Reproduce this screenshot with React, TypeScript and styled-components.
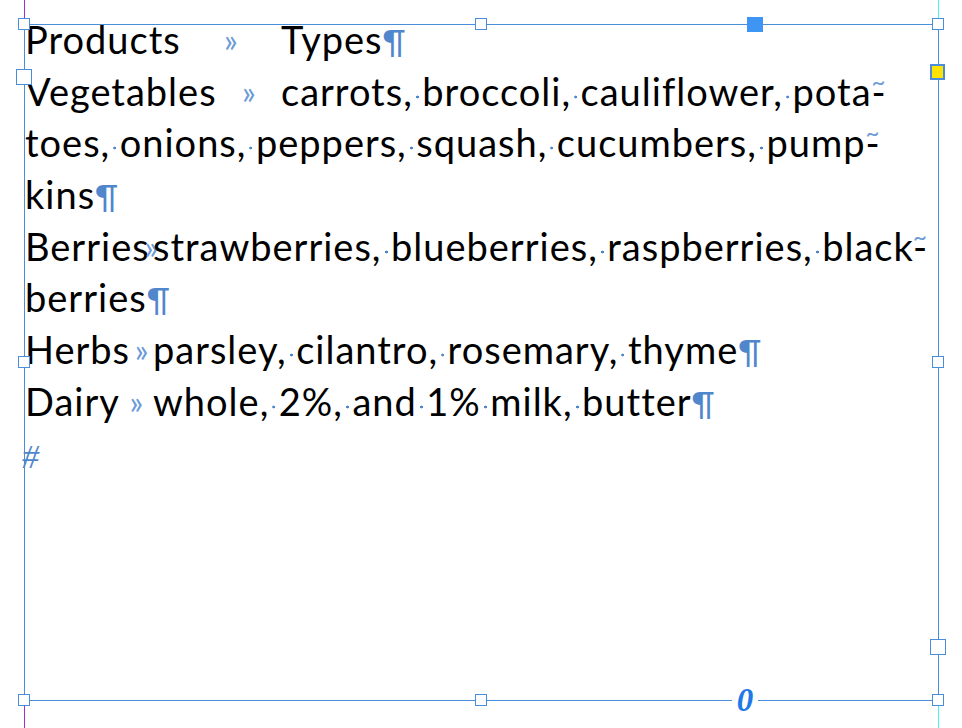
import React from "react";
import styled, { createGlobalStyle } from "styled-components";

const GlobalStyle = createGlobalStyle`
  html, body { margin: 0; padding: 0; background: #ffffff; }
  body { width: 962px; height: 728px; overflow: hidden; }
`;

const FRAME = "#4a8edb";
const HIDDEN = "#4f86cc";

const Stage = styled.div`
  position: relative;
  width: 962px;
  height: 728px;
  padding: 24px 0 0 24px;
  box-sizing: border-box;
  background: #fff;
`;

const Guide = styled.div<{ $x: number; $color: string }>`
  position: absolute;
  top: 0;
  bottom: 0;
  left: ${(p) => p.$x}px;
  width: 1px;
  background: ${(p) => p.$color};
`;

const Frame = styled.div`
  position: relative;
  width: 915px;
  height: 677px;
  box-sizing: border-box;
  border: 1px solid ${FRAME};
`;

const Handle = styled.div<{ $left: string; $top: string; $size?: number }>`
  position: absolute;
  left: ${(p) => p.$left};
  top: ${(p) => p.$top};
  width: ${(p) => p.$size ?? 12}px;
  height: ${(p) => p.$size ?? 12}px;
  box-sizing: border-box;
  border: 1.5px solid ${FRAME};
  background: #fff;
`;

const FilledHandle = styled.div`
  position: absolute;
  left: 722px;
  top: -8px;
  width: 16px;
  height: 15px;
  background: #3f95f4;
`;

const YellowHandle = styled.div`
  position: absolute;
  left: calc(100% - 8px);
  top: 39px;
  width: 15px;
  height: 16px;
  box-sizing: border-box;
  border: 2px solid ${FRAME};
  background: #ffe300;
`;

const Overflow = styled.div`
  position: absolute;
  left: 707px;
  top: calc(100% - 12px);
  width: 26px;
  height: 24px;
  background: #fff;
  display: flex;
  align-items: center;
  justify-content: center;
  font-family: "Liberation Serif", serif;
  font-style: italic;
  font-weight: bold;
  font-size: 33px;
  line-height: 24px;
  color: #1f7ae8;
`;

const Story = styled.div`
  margin-top: -11px;
  font-family: Lato, "Open Sans", sans-serif;
  font-size: 38px;
  letter-spacing: 1px;
  line-height: 51.7px;
  color: #000;
`;

const Line = styled.div`
  white-space: nowrap;
  height: 51.7px;
`;

const Lead = styled.span<{ $w: number }>`
  display: inline-flex;
  width: ${(p) => p.$w}px;
  vertical-align: baseline;
`;

const Label = styled.span`
  flex: none;
`;

const Tab = styled.span`
  flex: 1;
  display: inline-flex;
  justify-content: center;
  font-size: 32px;
  letter-spacing: 0;
  color: #6b9bd8;
  width: 0;
`;

const Space = styled.span`
  display: inline-block;
  width: 9.5px;
  height: 11px;
  background: radial-gradient(circle, #4f86cc 1.2px, transparent 1.7px) center top / 100% 4px no-repeat;
`;

const Pilcrow = styled.span`
  color: ${HIDDEN};
  font-size: 33px;
  letter-spacing: 0;
`;

const Hyphen = styled.span`
  position: relative;
  &::after {
    content: "~";
    position: absolute;
    left: 0;
    top: -13px;
    font-size: 24px;
    color: #6b9bd8;
  }
`;

const EndMark = styled.span`
  display: inline-block;
  margin-left: -3px;
  font-family: "Liberation Serif", serif;
  font-style: italic;
  font-size: 34px;
  color: ${HIDDEN};
`;

const Words: React.FC<{ text: string }> = ({ text }) => {
  const parts = text.split(" ");
  return (
    <>
      {parts.map((w, i) => (
        <React.Fragment key={i}>
          {i > 0 && <Space />}
          {w}
        </React.Fragment>
      ))}
    </>
  );
};

const Row: React.FC<{ label?: string; lead?: number; text: string; end: "pil" | "hy" | "none" }> = ({ label, lead, text, end }) => (
  <Line>
    {label !== undefined && (
      <Lead $w={lead ?? 0}>
        <Label>{label}</Label>
        <Tab>»</Tab>
      </Lead>
    )}
    <Words text={text} />
    {end === "pil" && <Pilcrow>¶</Pilcrow>}
    {end === "hy" && <Hyphen>-</Hyphen>}
  </Line>
);

export default function App() {
  return (
    <>
      <GlobalStyle />
      <Stage>
        <Guide $x={24} $color="#9b2fd6" />
        <Guide $x={938} $color="#43f3ef" />
        <Frame>
          <Story>
            <Row label="Products" lead={256} text="Types" end="pil" />
            <Row label="Vegetables" lead={256} text="carrots, broccoli, cauliflower, pota" end="hy" />
            <Row text="toes, onions, peppers, squash, cucumbers, pump" end="hy" />
            <Row text="kins" end="pil" />
            <Row label="Berries" lead={128} text="strawberries, blueberries, raspberries, black" end="hy" />
            <Row text="berries" end="pil" />
            <Row label="Herbs" lead={128} text="parsley, cilantro, rosemary, thyme" end="pil" />
            <Row label="Dairy" lead={128} text="whole, 2%, and 1% milk, butter" end="pil" />
            <Line>
              <EndMark>#</EndMark>
            </Line>
          </Story>
          <Handle $left="-7px" $top="-7px" />
          <Handle $left="calc(50% - 6.5px)" $top="-7px" />
          <Handle $left="calc(100% - 6px)" $top="-7px" />
          <Handle $left="-7px" $top="calc(50% - 6.5px)" />
          <Handle $left="calc(100% - 6px)" $top="calc(50% - 6.5px)" />
          <Handle $left="-7px" $top="calc(100% - 6px)" />
          <Handle $left="calc(50% - 6.5px)" $top="calc(100% - 6px)" />
          <Handle $left="calc(100% - 6px)" $top="calc(100% - 6px)" />
          <Handle $left="-9px" $top="44px" $size={16} />
          <Handle $left="calc(100% - 8px)" $top="614px" $size={16} />
          <FilledHandle />
          <YellowHandle />
          <Overflow>0</Overflow>
        </Frame>
      </Stage>
    </>
  );
}
